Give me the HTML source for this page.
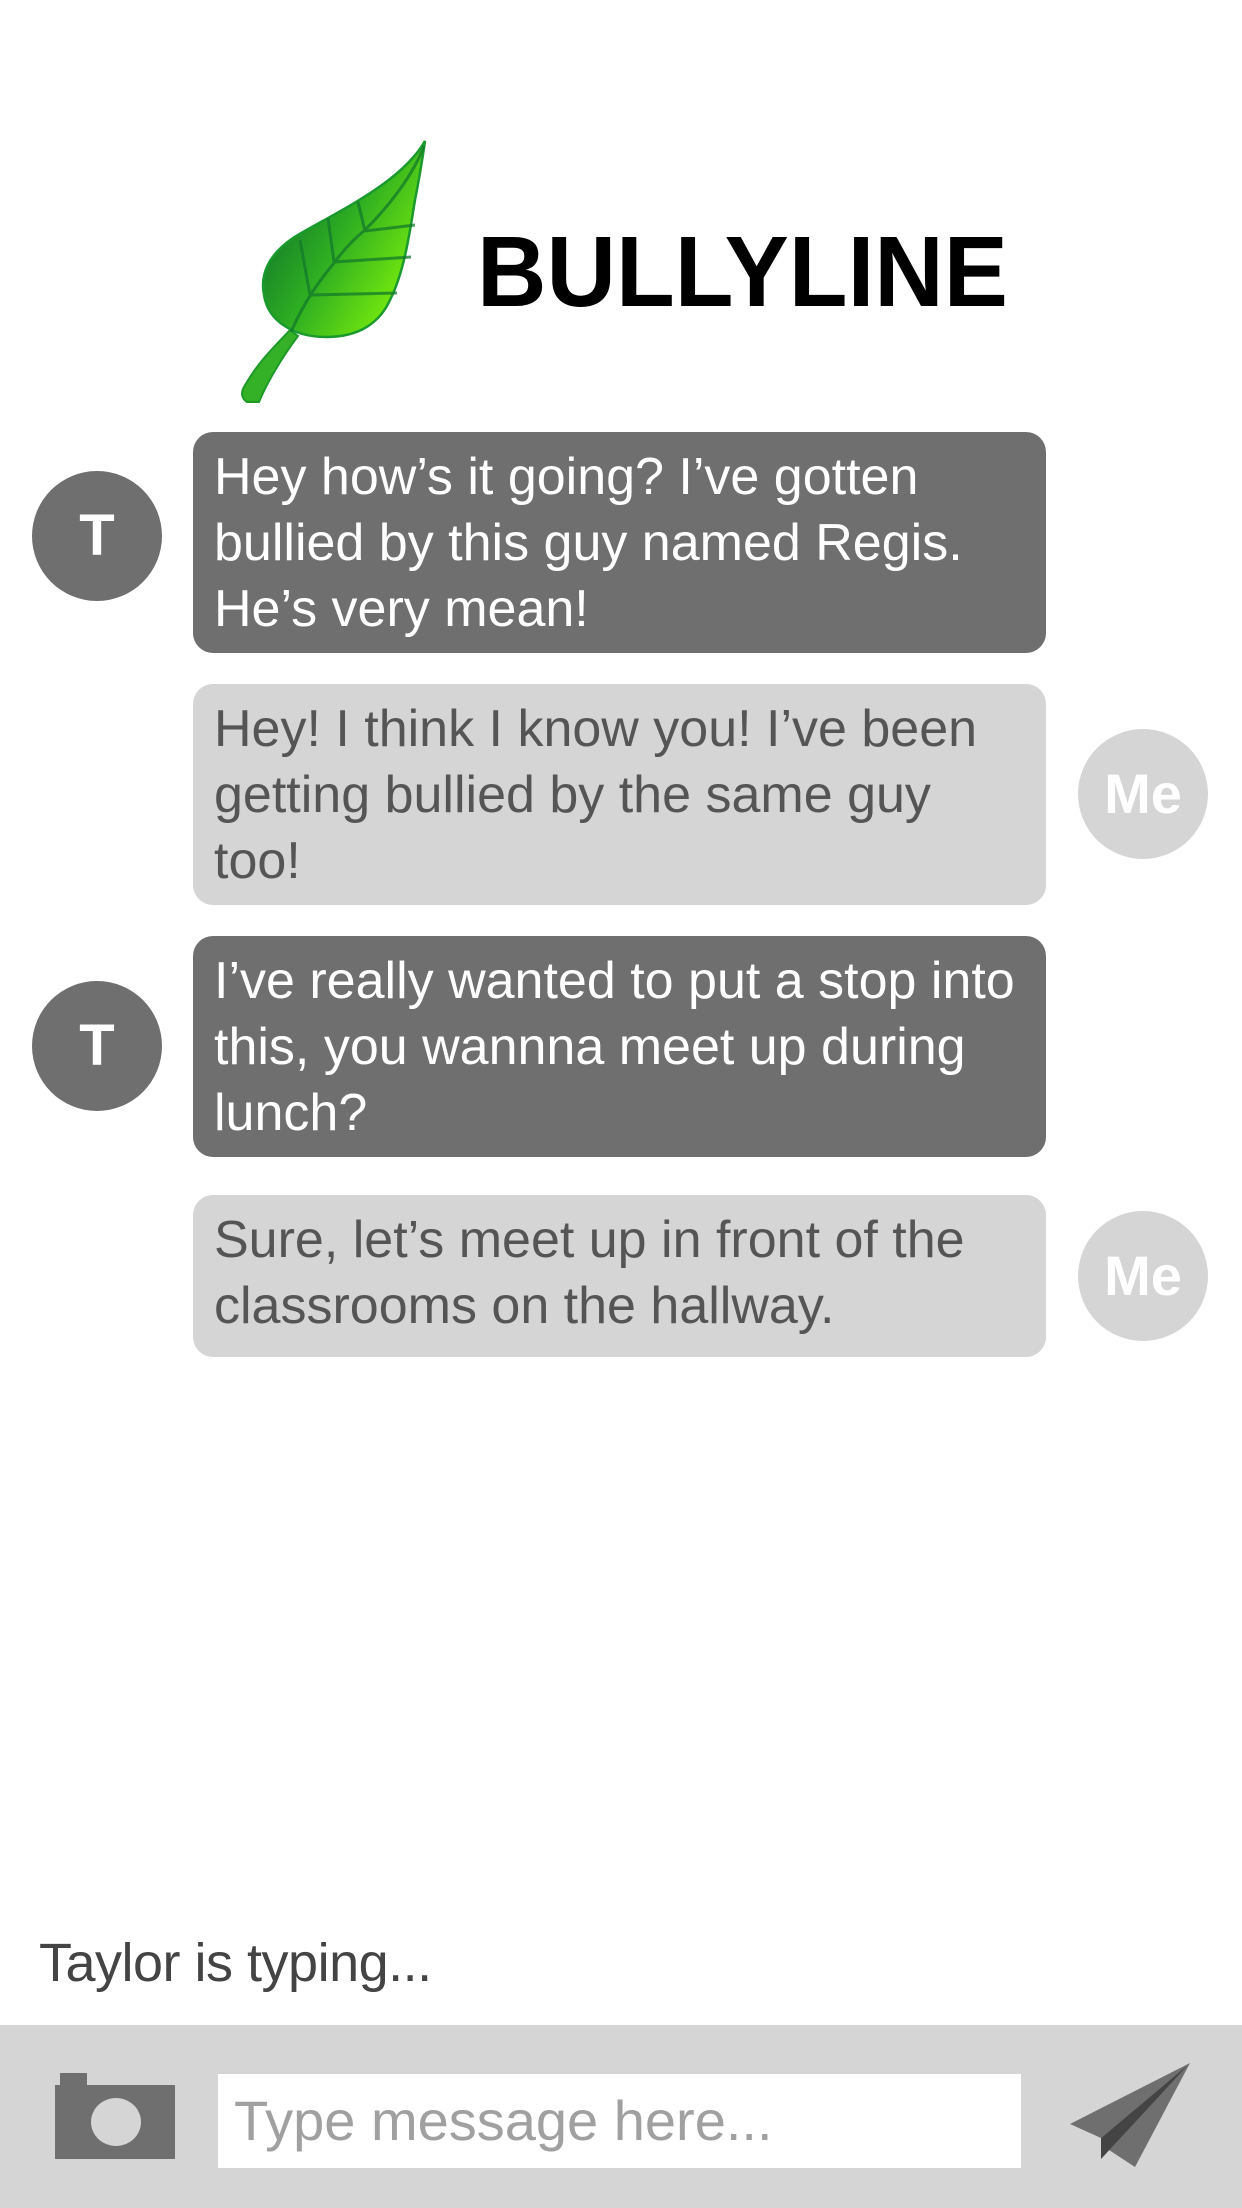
<!DOCTYPE html>
<html><head><meta charset="utf-8"><style>
html,body{margin:0;padding:0;background:#fff;}
body{width:1242px;height:2208px;position:relative;overflow:hidden;font-family:"Liberation Sans",sans-serif;}
.b{position:absolute;left:193px;width:853px;border-radius:20px;box-sizing:border-box;padding:12px 20px 0 21px;font-size:52px;line-height:66px;letter-spacing:0;white-space:nowrap;}
.d{background:#6f6f6f;color:#fff;}
.l{background:#d5d5d5;color:#555;}
.av{position:absolute;width:130px;height:130px;border-radius:50%;color:#fff;font-weight:bold;text-align:center;line-height:130px;}
.t{left:32px;background:#6f6f6f;font-size:58px;}
.m{left:1078px;background:#d5d5d5;font-size:56px;}
</style></head><body>
<svg style="position:absolute;left:0;top:0" width="1242" height="450" viewBox="0 0 1242 450">
<defs><linearGradient id="g" x1="0" y1="0" x2="1" y2="0.7"><stop offset="0.1" stop-color="#0a6a2c"/><stop offset="0.55" stop-color="#2fae22"/><stop offset="1" stop-color="#80f20a"/></linearGradient></defs>
<path d="M290,330 L298,336 C280,360 266,385 259,402 L247,402 C241,398 241,392 244,387 C258,362 274,347 290,330 Z" fill="#35b127" stroke="#1f9a2a" stroke-width="2"/>
<path d="M425,141 C400,185 330,215 293,238 C268,255 260,275 264,295 C268,322 295,337 326,337 C360,337 380,322 390,300 C405,270 410,230 415,200 C420,175 423,155 425,141 Z" fill="url(#g)" stroke="#1a9a2e" stroke-width="2.5"/>
<g stroke="#137a2a" stroke-width="3" fill="none" opacity="0.75">
<path d="M291,332 C305,300 320,280 334,263 C345,248 355,238 365,230 C395,200 415,170 424,146"/>
<path d="M310,295 L397,293"/>
<path d="M334,262 L411,257"/>
<path d="M365,231 L415,225"/>
<path d="M310,295 L300,240"/><path d="M334,262 L328,218"/><path d="M365,231 L358,202"/>
</g>
</svg>
<div style="position:absolute;left:477px;top:215px;font-size:100px;font-weight:bold;color:#000;line-height:115px;transform:scaleX(0.962);transform-origin:left top;">BULLYLINE</div>

<div class="av t" style="top:471px">T</div>
<div class="b d" style="top:432px;height:221px">Hey how’s it going? I’ve gotten<br>bullied by this guy named Regis.<br>He’s very mean!</div>
<div class="b l" style="top:684px;height:221px">Hey! I think I know you! I’ve been<br>getting bullied by the same guy<br>too!</div>
<div class="av m" style="top:729px">Me</div>
<div class="av t" style="top:981px">T</div>
<div class="b d" style="top:936px;height:221px">I’ve really wanted to put a stop into<br>this, you wannna meet up during<br>lunch?</div>
<div class="b l" style="top:1195px;height:162px">Sure, let’s meet up in front of the<br>classrooms on the hallway.</div>
<div class="av m" style="top:1211px">Me</div>

<div style="position:absolute;left:39px;top:1930px;font-size:54px;line-height:66px;color:#444;letter-spacing:-0.5px">Taylor is typing...</div>

<div style="position:absolute;left:0;top:2025px;width:1242px;height:183px;background:#d5d5d5"></div>
<svg style="position:absolute;left:0;top:2025px" width="1242" height="183" viewBox="0 2025 1242 183">
<rect x="60" y="2073" width="27" height="14" fill="#6f6f6f"/>
<rect x="55" y="2085" width="120" height="74" fill="#6f6f6f"/>
<ellipse cx="116" cy="2122" rx="25" ry="24" fill="#d5d5d5"/>
<polygon points="1190,2063 1070,2124 1101,2138" fill="#6f6f6f"/>
<polygon points="1190,2063 1109,2150 1135,2167" fill="#6f6f6f"/>
<polygon points="1190,2063 1101,2138 1101,2159" fill="#444"/>
</svg>
<div style="position:absolute;left:218px;top:2074px;width:803px;height:94px;background:#fff;box-sizing:border-box;padding-left:16px;font-size:56px;line-height:94px;color:#a0a0a0;letter-spacing:0">Type message here...</div>
</body></html>
